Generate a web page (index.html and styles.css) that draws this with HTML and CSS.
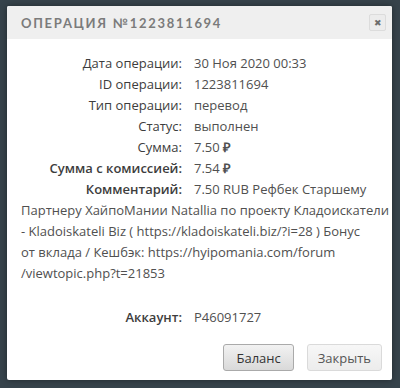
FILE: index.html
```html
<!DOCTYPE html>
<html lang="ru">
<head>
  <meta charset="UTF-8">
  <title>Операция №1223811694</title>
  <link rel="stylesheet" href="styles.css">
</head>
<body>

  <div class="dialog">
    <div class="dialog-head">
      <span class="dialog-title">Операция №1223811694</span>
      <span class="close">&#x2716;</span>
    </div>

    <div class="dialog-body">
      <div class="row"><span class="label">Дата операции:</span>30 Ноя 2020 00:33</div>
      <div class="row"><span class="label">ID операции:</span>1223811694</div>
      <div class="row"><span class="label">Тип операции:</span>перевод</div>
      <div class="row"><span class="label">Статус:</span>выполнен</div>
      <div class="row"><span class="label">Сумма:</span>7.50 <b class="rub">₽</b></div>
      <div class="row"><span class="label bold">Сумма с комиссией:</span>7.54 <b class="rub">₽</b></div>
      <div class="row comment"><span class="label bold">Комментарий:</span>7.50 RUB Рефбек Старшему<br>
        Партнеру ХайпоМании Natallia по проекту Кладоискатели<br>
        - Kladoiskateli Biz ( https://kladoiskateli.biz/?i=28 ) Бонус<br>
        от вклада / Кешбэк: https://hyipomania.com/forum<br>
        /viewtopic.php?t=21853</div>
      <div class="row account"><span class="label bold">Аккаунт:</span>P46091727</div>
    </div>

    <div class="dialog-foot">
      <button class="btn btn-main">Баланс</button>
      <button class="btn">Закрыть</button>
    </div>
  </div>

</body>
</html>
```

FILE: styles.css
```css
body {
  margin: 0;
  padding: 6px 8px 8px 7px;
  background: #36434b;
  font-family: "Open Sans", Arial, sans-serif;
}

.dialog {
  background: white;
  border-radius: 2px;
  box-shadow: 0 0 6px rgba(0,0,0,0.4);
}

.dialog-head {
  display: flex;
  align-items: center;
  justify-content: space-between;
  height: 33px;
  padding: 0 6px 0 14px;
  background: #efefef;
  border-radius: 2px 2px 0 0;
}

.dialog-title {
  font-family: "Lato", Arial, sans-serif;
  font-weight: bold;
  font-size: 13px;
  letter-spacing: 1.7px;
  text-transform: uppercase;
  color: #7b7b7b;
}

.close {
  width: 15px;
  height: 15px;
  line-height: 15px;
  text-align: center;
  font-size: 9px;
  color: #6d6d6d;
  border: 1px solid #dcdcdc;
  border-radius: 2px;
  background: #ececec;
}

.dialog-body {
  padding: 14px 6px 0 14px;
  font-size: 13px;
  line-height: 21px;
  color: #505050;
}

.label {
  display: inline-block;
  width: 161px;
  margin-right: 12px;
  text-align: right;
  color: #3d3d3d;
}

.comment {
  white-space: nowrap;
}

.bold {
  font-weight: 600;
}

.rub {
  font-weight: bold;
}

.account {
  margin-top: 23px;
}

.dialog-foot {
  display: flex;
  justify-content: flex-end;
  gap: 13px;
  padding: 16px 10px 9px 0;
}

.btn {
  height: 27px;
  padding: 0 10px;
  font-family: "Open Sans", Arial, sans-serif;
  font-size: 13px;
  color: #555;
  border: 1px solid #dadada;
  border-radius: 3px;
  background: linear-gradient(#f7f7f7, #ececec);
}

.btn-main {
  padding: 0 12px;
  color: #333;
  border-color: #aaa;
  background: linear-gradient(#f2f2f2, #d9d9d9);
}
```
